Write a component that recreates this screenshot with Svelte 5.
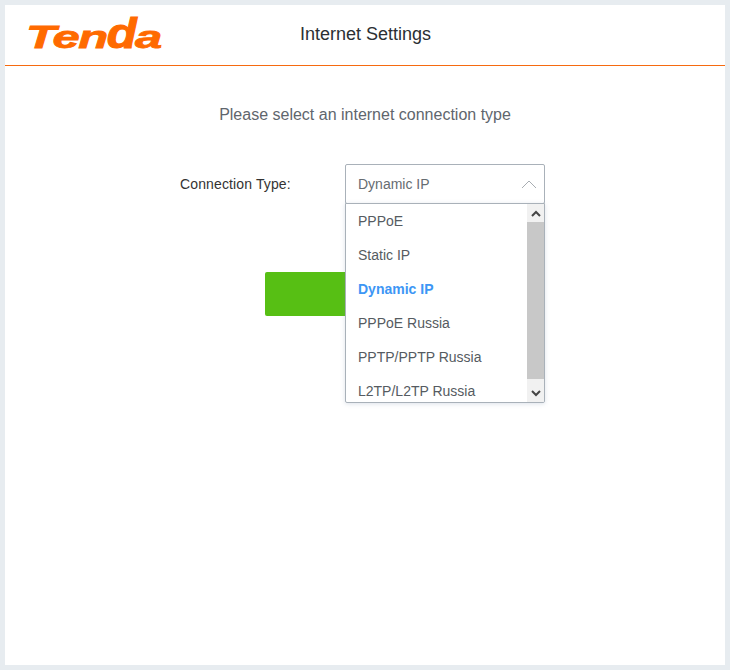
<script>
  const options = ['PPPoE', 'Static IP', 'Dynamic IP', 'PPPoE Russia', 'PPTP/PPTP Russia', 'L2TP/L2TP Russia'];
  const selected = 'Dynamic IP';
</script>

<div class="page">
  <header class="header">
    <div class="logo-box"><span class="logo">Ten<span class="tall">d</span>a</span></div>
    <h1 class="title">Internet Settings</h1>
  </header>
  <main class="main">
    <p class="lead">Please select an internet connection type</p>
    <div class="row">
      <span class="label">Connection Type:</span>
      <div class="select">
        <div class="value">
          <span>{selected}</span>
          <svg width="16" height="10" viewBox="0 0 16 10"><path d="M1 9 L8 2 L15 9" fill="none" stroke="#a8adb2" stroke-width="1"/></svg>
        </div>
        <div class="menu">
          <ul class="list">
            {#each options as o}
              <li class:active={o === selected}>{o}</li>
            {/each}
          </ul>
          <div class="scrollbar">
            <div class="sb-btn up">
              <svg width="10" height="7" viewBox="0 0 10 7"><path d="M1 6 L5 2 L9 6" fill="none" stroke="#444" stroke-width="2"/></svg>
            </div>
            <div class="thumb"></div>
            <div class="track"></div>
            <div class="sb-btn">
              <svg width="10" height="7" viewBox="0 0 10 7"><path d="M1 1 L5 5 L9 1" fill="none" stroke="#444" stroke-width="2"/></svg>
            </div>
          </div>
        </div>
      </div>
    </div>
    <div class="actions"><button class="btn" aria-label="Next"></button></div>
  </main>
</div>

<style>
  :global(body) { margin: 0; background: #e7ecf0; }
  .page {
    box-sizing: border-box;
    width: 720px;
    height: 660px;
    margin: 5px;
    background: #fff;
    font-family: "Liberation Sans", Arial, sans-serif;
  }
  .header {
    height: 61px;
    box-sizing: border-box;
    border-bottom: 1px solid #f66a10;
    display: flex;
    align-items: center;
  }
  .logo-box { width: 295px; padding-left: 21px; box-sizing: border-box; height: 60px; overflow: hidden; }
  .logo {
    display: inline-block;
    margin-top: 12px;
    color: #ff6a00;
    font-weight: 700;
    font-style: italic;
    font-size: 32px;
    line-height: 40px;
    letter-spacing: -1px;
    white-space: nowrap;
    -webkit-text-stroke: 0.8px #ff6a00;
    transform: scaleX(1.53);
    transform-origin: left center;
  }
  .tall { display: inline-block; transform: scaleY(1.32); transform-origin: center 78%; }
  .title { margin: 0 0 2px; font-size: 18px; font-weight: 400; color: #2b2f33; }
  .lead { margin: 0; padding-top: 40px; text-align: center; font-size: 16px; line-height: 18px; color: #5f666d; }
  .row { display: flex; margin-top: 40px; padding-left: 175px; position: relative; }
  .label { width: 165px; font-size: 14px; line-height: 40px; color: #333; letter-spacing: 0.13px; }
  .select { position: relative; width: 200px; }
  .value {
    box-sizing: border-box;
    height: 40px;
    border: 1px solid #a9b1b9;
    border-radius: 2px;
    padding: 0 7px 0 12px;
    display: flex;
    justify-content: space-between;
    align-items: center;
    font-size: 14px;
    color: #666c72;
    background: #fff;
  }
  .menu {
    position: absolute;
    top: 39px;
    left: 0;
    width: 200px;
    height: 200px;
    box-sizing: border-box;
    border: 1px solid #a9b1b9;
    border-radius: 0 0 2px 2px;
    background: #fff;
    box-shadow: 0 1px 4px rgba(120, 140, 170, 0.25);
    display: flex;
    overflow: hidden;
    z-index: 2;
  }
  .list { list-style: none; margin: 0; padding: 0; flex: 1; overflow: hidden; }
  .list li { height: 34px; line-height: 34px; padding-left: 12px; font-size: 14px; color: #555b61; }
  .list li.active { color: #3d96f5; font-weight: 700; }
  .scrollbar { width: 17px; display: flex; flex-direction: column; background: #f1f1f1; }
  .sb-btn { height: 17px; display: flex; align-items: center; justify-content: center; }
  .sb-btn.up { height: 18px; }
  .thumb { height: 157px; background: #c8c8c8; }
  .track { flex: 1; }
  .actions { margin-top: 68px; padding-left: 260px; }
  .btn {
    display: block;
    width: 200px;
    height: 44px;
    border: 0;
    border-radius: 2px;
    background: #57bf14;
  }
</style>
